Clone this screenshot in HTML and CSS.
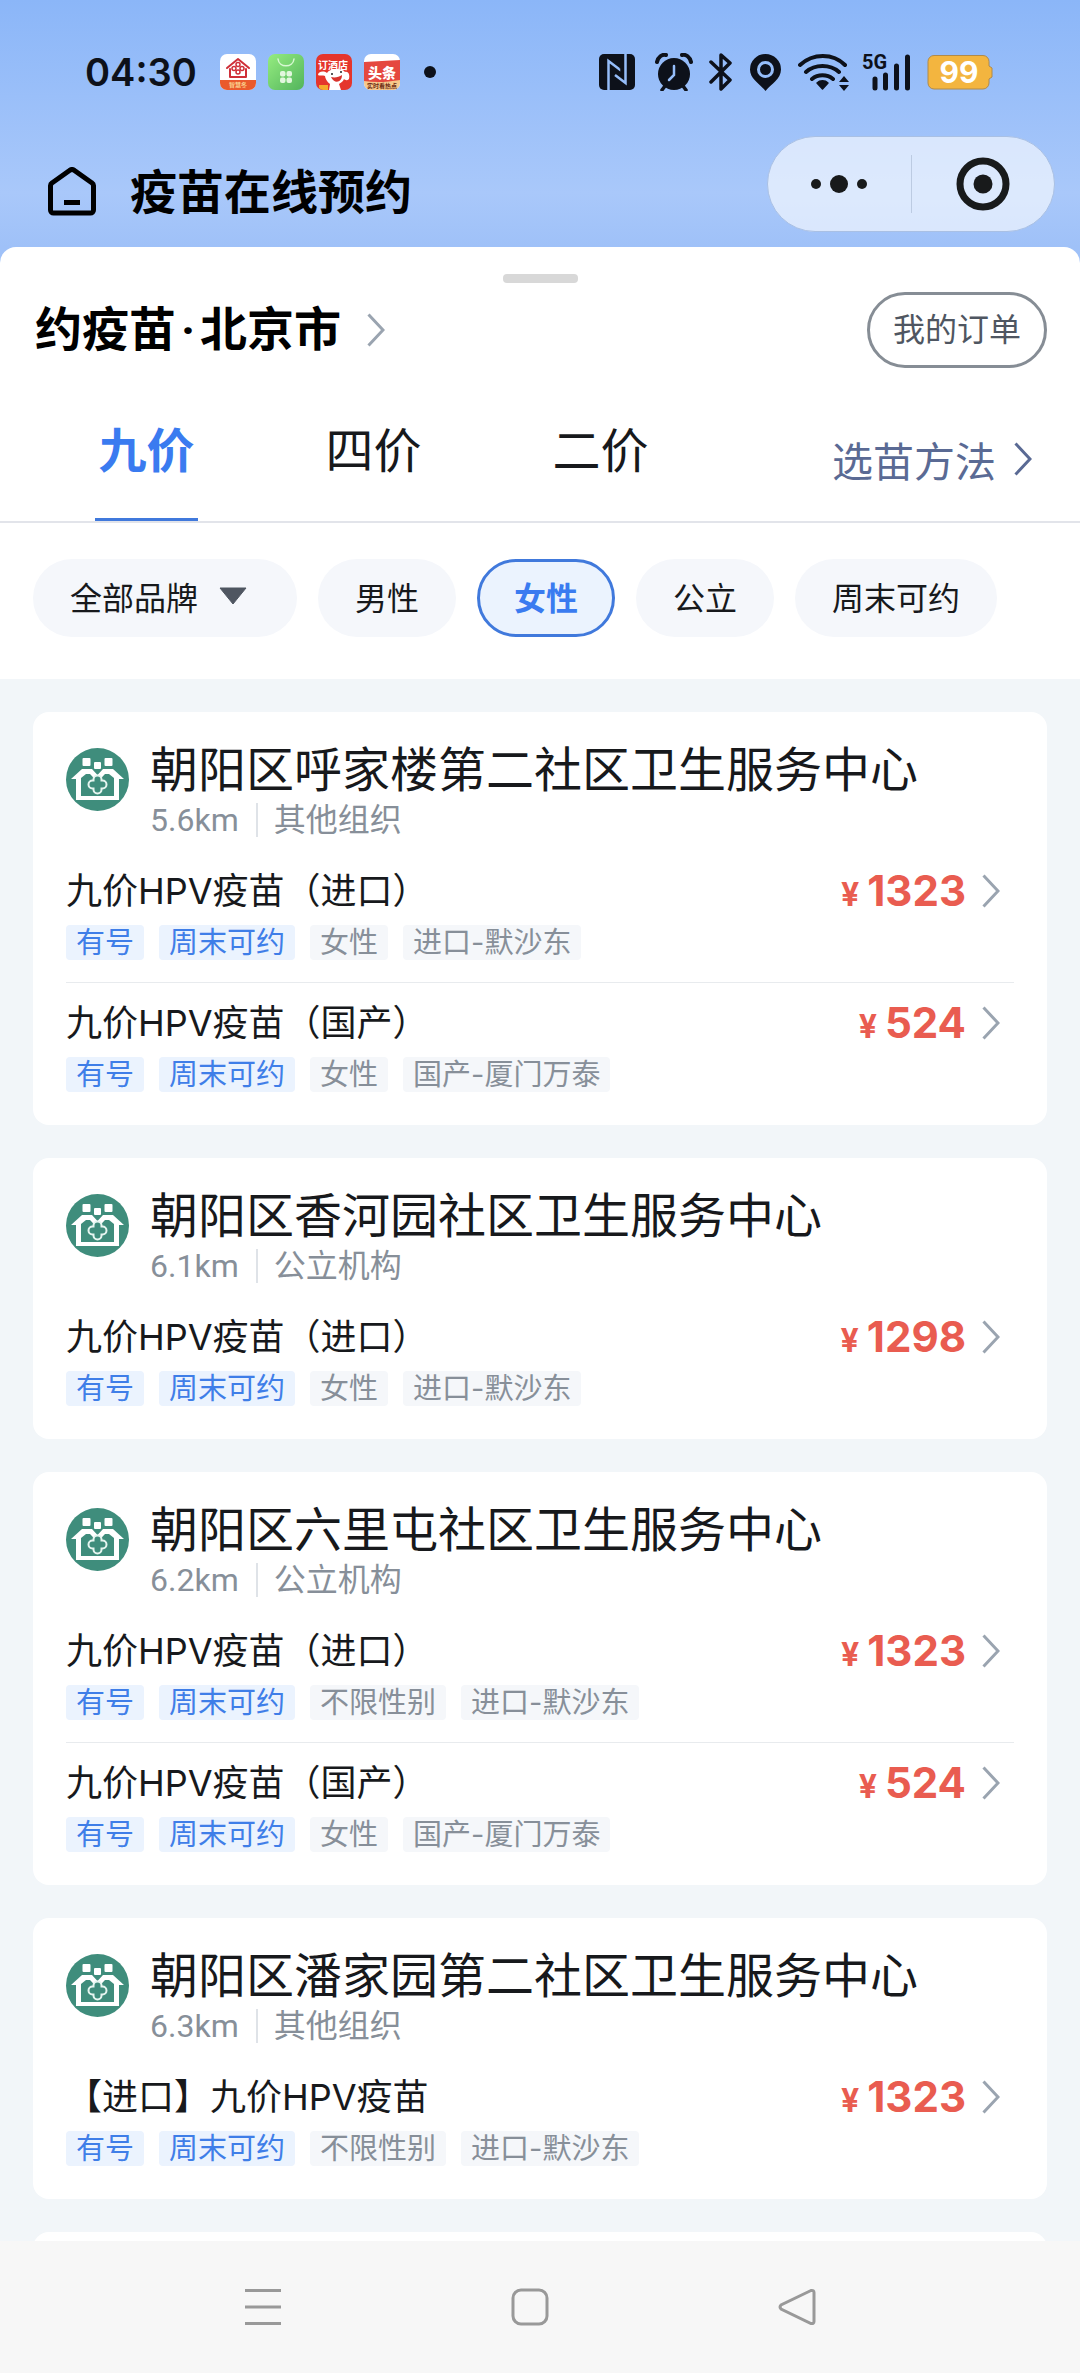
FILE: index.html
```html
<!DOCTYPE html>
<html lang="zh-CN">
<head>
  <meta charset="UTF-8">
  <meta name="viewport" content="width=device-width, initial-scale=1">
  <title>疫苗在线预约</title>
  <link rel="stylesheet" href="styles.css">
</head>
<body>
  <svg class="defs" aria-hidden="true">
    <symbol id="chevron" viewBox="0 0 18 34">
      <path d="M1.5 1.5 16 17 1.5 32.5" fill="none" stroke="currentColor" stroke-width="3"/>
    </symbol>
    <!-- community health logo -->
    <symbol id="clinic" viewBox="0 0 63 63">
      <circle cx="31.5" cy="31.5" r="31.5" fill="#3f8d7c"/>
      <g fill="#fff">
        <rect x="16.500" y="10" width="8" height="8" rx="1"/>
        <rect x="38.500" y="10" width="8" height="8" rx="1"/>
        <rect x="28" y="14" width="7" height="7" rx="1"/>
        <path d="M5 31 16 21h10l5.500 6 5.500-6h10l11 10h-5v21H10V31zM15 30v18h33V30l-5-4h-4l-7.500 8-7.500-8h-4z" fill-rule="evenodd"/>
      </g>
      <path d="M27.500 31.500a4 4 0 0 1 8 0v1h1a4 4 0 0 1 0 8h-1v1a4 4 0 0 1-8 0v-1h-1a4 4 0 0 1 0-8h1z" fill="#3f8d7c" stroke="#e6f5f0" stroke-width="2"/>
    </symbol>
  </svg>

  <header class="top">
    <div class="status">
      <span class="clock">04:30</span>
      <div class="apps">
        <svg width="36" height="36" viewBox="0 0 36 36">
          <rect width="36" height="36" rx="7" fill="#fff"/>
          <path d="M0 26h36v3a7 7 0 0 1-7 7H7a7 7 0 0 1-7-7z" fill="#ea5a2c"/>
          <path d="M7 14 18 5l11 9M10 15v8h16v-8" fill="none" stroke="#cf2f38" stroke-width="2" stroke-linejoin="round" stroke-linecap="round"/>
          <g fill="none" stroke="#cf2f38" stroke-width="1.500"><circle cx="18" cy="10.500" r="2"/><circle cx="18" cy="18" r="2"/><circle cx="14" cy="14.500" r="2"/><circle cx="22" cy="14.500" r="2"/></g>
          <text x="18" y="33" text-anchor="middle" class="app-mini gold">智慧冬</text>
        </svg>
        <svg width="36" height="36" viewBox="0 0 36 36">
          <linearGradient id="leaf" x2="1" y2="1"><stop stop-color="#95ec80"/><stop offset="1" stop-color="#52b45c"/></linearGradient>
          <rect width="36" height="36" rx="7" fill="url(#leaf)"/>
          <path d="M10 5c1 9 15 9 16 0" fill="none" stroke="#d7f8d3" stroke-width="1.500" stroke-linecap="round"/>
          <g fill="#e2f7de"><rect x="12" y="17" width="5.500" height="5.500" rx="2"/><rect x="18.500" y="17" width="5.500" height="5.500" rx="2"/><rect x="12" y="23.500" width="5.500" height="5.500" rx="2"/><rect x="18.500" y="23.500" width="5.500" height="5.500" rx="2"/></g>
        </svg>
        <svg width="36" height="36" viewBox="0 0 36 36">
          <rect width="36" height="36" rx="7" fill="#e5352c"/>
          <text x="17" y="15" text-anchor="middle" class="app-text">订酒店</text>
          <path d="M11 19c2-4 14-6 18-1 4-1 5 4 4 7-2 2-4 1-5 0-1 3-4 4-5 5l2 6H13l1-6c-3-2-5-6-5-8-2-1-6 0-7-1 0-3 5-5 9-2z" fill="#fff"/>
          <path d="M15 23c4 1 8 0 11-2 0 8-8 9-11 2z" fill="#d8332d"/>
          <circle cx="16" cy="20" r="1" fill="#222"/><circle cx="25" cy="18" r="1" fill="#222"/>
          <path d="M3 31h9v5H7a7 7 0 0 1-4-2z" fill="#f5a92c"/>
        </svg>
        <svg width="36" height="36" viewBox="0 0 36 36">
          <rect width="36" height="36" rx="7" fill="#fff"/>
          <path d="M0 8 36 6v22H0z" fill="#e5483f"/>
          <path d="M0 27c12 2 24 1 36-1v3a7 7 0 0 1-7 7H7a7 7 0 0 1-7-7z" fill="#f7c98c"/>
          <text x="18" y="24" text-anchor="middle" class="app-big">头条</text>
          <text x="18" y="34" text-anchor="middle" class="app-mini">实时看热点</text>
        </svg>
      </div>
      <span class="dot"></span>
      <div class="signals">
        <svg width="36" height="36" viewBox="0 0 36 36">
          <rect width="36" height="36" rx="5" fill="#0d111a"/>
          <path d="M9.500 36V7L20 15v-.5M26.500 0v29L16 21" fill="none" stroke="#95bdf9" stroke-width="2.500"/>
        </svg>
        <svg width="38" height="38" viewBox="0 0 38 38" class="alarm">
          <circle cx="19" cy="21" r="16" fill="#0d111a"/>
          <path d="M2 9c1-5 5-8 9-7M36 9c-1-5-5-8-9-7" fill="none" stroke="#0d111a" stroke-width="4" stroke-linecap="round"/>
          <path d="m10 33-3 4M28 33l3 4" stroke="#0d111a" stroke-width="3.500" stroke-linecap="round"/>
          <path d="M19 13v9l-5 5" fill="none" stroke="#95bdf9" stroke-width="2.500" stroke-linecap="round"/>
        </svg>
        <svg width="24" height="38" viewBox="0 0 24 38" class="bt">
          <path d="m2 9 19 18-9 9V2l9 8L2 29" fill="none" stroke="#0d111a" stroke-width="3.500" stroke-linejoin="round" stroke-linecap="round"/>
        </svg>
        <svg width="31" height="37" viewBox="0 0 31 37" class="pin">
          <path d="M15.500 0A15.500 15.500 0 0 1 31 15.500C31 25 21 30 15.500 37 10 30 0 25 0 15.500A15.500 15.500 0 0 1 15.500 0z" fill="#0d111a"/>
          <circle cx="15.500" cy="15.500" r="7" fill="none" stroke="#95bdf9" stroke-width="3"/>
        </svg>
        <svg width="51" height="37" viewBox="0 0 51 37" class="wifi">
          <path d="M2 11C15-1 35-1 47 11M8 18c9-8 24-8 33 0M14 25c6-5 15-5 21 0" fill="none" stroke="#0d111a" stroke-width="4" stroke-linecap="round"/>
          <path d="M19 29c3-3 8-3 11 0l-5.500 6z" fill="#0d111a" stroke="#0d111a" stroke-width="1.500" stroke-linejoin="round"/>
          <path d="m41 28 5-6 5 6zM41 31h10l-5 6z" fill="#0d111a"/>
        </svg>
        <svg width="49" height="50" viewBox="0 -6 49 50" class="cell">
          <text x="0" y="16" class="net">5G</text>
          <path d="M13 26v9M23.500 22v13M34.500 13v22M45.500 4v31" stroke="#0d111a" stroke-width="5" stroke-linecap="round"/>
        </svg>
        <svg width="66" height="36" viewBox="0 0 66 36" class="battery">
          <path d="M7 1.500h49a6 6 0 0 1 6 6V12l3 2v9l-3 2v4a6 6 0 0 1-6 6H7a6 6 0 0 1-6-6V7.500a6 6 0 0 1 6-6z" fill="#f3b53f" stroke="#b08a4a"/>
          <text x="32" y="29" text-anchor="middle" class="charge">99</text>
        </svg>
      </div>
    </div>

    <div class="navbar">
      <button class="home" aria-label="首页">
        <svg width="48" height="49" viewBox="0 0 48 49">
          <path d="M21.500 3.500 4 16a3 3 0 0 0-1.500 2.500V43A3 3 0 0 0 5.500 46h37a3 3 0 0 0 3-3V18.500A3 3 0 0 0 44 16L26.500 3.500a4 4 0 0 0-5 0zM16 35.500h16" fill="none" stroke="#000" stroke-width="5"/>
        </svg>
      </button>
      <h1>疫苗在线预约</h1>
      <div class="capsule">
        <button aria-label="更多">
          <svg width="58" height="20" viewBox="0 0 58 20"><circle cx="6" cy="10" r="5"/><circle cx="29" cy="10" r="9"/><circle cx="52" cy="10" r="5"/></svg>
        </button>
        <button aria-label="关闭">
          <svg width="54" height="54" viewBox="0 0 54 54"><circle cx="27" cy="27" r="23" fill="none" stroke="#181a1b" stroke-width="7"/><circle cx="27" cy="27" r="9.500"/></svg>
        </button>
      </div>
    </div>
  </header>

  <main>
    <section class="sheet">
      <div class="grabber"></div>
      <div class="city-row">
        <button class="city">约疫苗<span class="sep">·</span>北京市<svg class="chevron"><use href="#chevron"/></svg></button>
        <button class="orders">我的订单</button>
      </div>
      <div class="tabs">
        <button class="tab active"><span>九价</span></button>
        <button class="tab"><span>四价</span></button>
        <button class="tab"><span>二价</span></button>
        <a class="howto" href="#">选苗方法<svg class="chevron"><use href="#chevron"/></svg></a>
      </div>
      <div class="filters">
        <button class="chip brand">全部品牌<svg width="28" height="18" viewBox="0 0 28 18"><path d="M1 1h26L14 17z" fill="#4f5661" stroke="#4f5661" stroke-linejoin="round"/></svg></button>
        <button class="chip">男性</button>
        <button class="chip on">女性</button>
        <button class="chip">公立</button>
        <button class="chip">周末可约</button>
      </div>
    </section>

    <section class="list">
      <article class="card">
        <div class="head">
          <svg class="logo"><use href="#clinic"/></svg>
          <div>
            <h2>朝阳区呼家楼第二社区卫生服务中心</h2>
            <p class="meta"><span>5.6km</span><span>其他组织</span></p>
          </div>
        </div>
        <div class="item">
          <div class="line"><h3>九价HPV疫苗（进口）</h3><span class="price"><small>¥</small>1323</span><svg class="chevron"><use href="#chevron"/></svg></div>
          <div class="tags"><span class="tag blue">有号</span><span class="tag blue">周末可约</span><span class="tag">女性</span><span class="tag">进口-默沙东</span></div>
        </div>
        <div class="item">
          <div class="line"><h3>九价HPV疫苗（国产）</h3><span class="price"><small>¥</small>524</span><svg class="chevron"><use href="#chevron"/></svg></div>
          <div class="tags"><span class="tag blue">有号</span><span class="tag blue">周末可约</span><span class="tag">女性</span><span class="tag">国产-厦门万泰</span></div>
        </div>
      </article>

      <article class="card">
        <div class="head">
          <svg class="logo"><use href="#clinic"/></svg>
          <div>
            <h2>朝阳区香河园社区卫生服务中心</h2>
            <p class="meta"><span>6.1km</span><span>公立机构</span></p>
          </div>
        </div>
        <div class="item">
          <div class="line"><h3>九价HPV疫苗（进口）</h3><span class="price"><small>¥</small>1298</span><svg class="chevron"><use href="#chevron"/></svg></div>
          <div class="tags"><span class="tag blue">有号</span><span class="tag blue">周末可约</span><span class="tag">女性</span><span class="tag">进口-默沙东</span></div>
        </div>
      </article>

      <article class="card">
        <div class="head">
          <svg class="logo"><use href="#clinic"/></svg>
          <div>
            <h2>朝阳区六里屯社区卫生服务中心</h2>
            <p class="meta"><span>6.2km</span><span>公立机构</span></p>
          </div>
        </div>
        <div class="item">
          <div class="line"><h3>九价HPV疫苗（进口）</h3><span class="price"><small>¥</small>1323</span><svg class="chevron"><use href="#chevron"/></svg></div>
          <div class="tags"><span class="tag blue">有号</span><span class="tag blue">周末可约</span><span class="tag">不限性别</span><span class="tag">进口-默沙东</span></div>
        </div>
        <div class="item">
          <div class="line"><h3>九价HPV疫苗（国产）</h3><span class="price"><small>¥</small>524</span><svg class="chevron"><use href="#chevron"/></svg></div>
          <div class="tags"><span class="tag blue">有号</span><span class="tag blue">周末可约</span><span class="tag">女性</span><span class="tag">国产-厦门万泰</span></div>
        </div>
      </article>

      <article class="card">
        <div class="head">
          <svg class="logo"><use href="#clinic"/></svg>
          <div>
            <h2>朝阳区潘家园第二社区卫生服务中心</h2>
            <p class="meta"><span>6.3km</span><span>其他组织</span></p>
          </div>
        </div>
        <div class="item">
          <div class="line"><h3>【进口】九价HPV疫苗</h3><span class="price"><small>¥</small>1323</span><svg class="chevron"><use href="#chevron"/></svg></div>
          <div class="tags"><span class="tag blue">有号</span><span class="tag blue">周末可约</span><span class="tag">不限性别</span><span class="tag">进口-默沙东</span></div>
        </div>
      </article>

      <article class="card"></article>
    </section>
  </main>

  <nav class="sysbar">
    <button aria-label="菜单"><svg width="38" height="38" viewBox="0 0 38 38"><path d="M1 2.500h36M1 19h36M1 35.500h36"/></svg></button>
    <button aria-label="主屏幕"><svg width="38" height="38" viewBox="0 0 38 38"><rect x="2" y="2" width="34" height="34" rx="8"/></svg></button>
    <button aria-label="返回"><svg width="38" height="38" viewBox="0 0 38 38"><path d="M33 2.500 3 17q-2 2 0 4l30 14.500q3 .5 3-2v-29q0-2.500-3-2z"/></svg></button>
  </nav>
</body>
</html>
```

FILE: styles.css
```css
* { box-sizing: border-box; }
body {
  margin: 0;
  height: 100vh;
  display: flex;
  flex-direction: column;
  overflow: hidden;
  background: #f2f6f9;
  color: #17191c;
  font-family: Roboto, "Noto Sans CJK SC", sans-serif;
}
button { padding: 0; border: 0; background: none; font: inherit; color: inherit; }
h1, h2, h3, p { margin: 0; }
svg { display: block; flex: none; }
.defs { position: absolute; width: 0; height: 0; }
.chevron { width: 18px; height: 34px; color: #9aa4b0; }

/* header */
.top {
  padding-bottom: 16px;
  background: linear-gradient(#8bb6f8, #a9c8fa 78%, #9fc1f8);
}
.status {
  display: flex;
  align-items: center;
  height: 136px;
  padding: 8px 87px 0 85px;
  color: #0d111a;
}
.clock { width: 135px; font: 600 38px/48px Inter, sans-serif; }
.apps { display: flex; gap: 12px; }
.dot { width: 12px; height: 12px; margin-left: 24px; border-radius: 50%; background: #0d111a; }
.app-text { font: 700 10px "Noto Sans CJK SC", sans-serif; fill: #fff; }
.app-big { font: 900 14px "Noto Sans CJK SC", sans-serif; fill: #fff; }
.app-mini { font: 700 6px "Noto Sans CJK SC", sans-serif; fill: #6b2a12; }
.gold { fill: #f9cf8d; }
.signals { display: flex; align-items: center; margin-left: auto; }
.alarm { margin-left: 20px; }
.bt { margin-left: 16px; }
.pin { margin-left: 17px; }
.wifi { margin-left: 17px; }
.cell { margin-left: 13px; }
.battery { margin-left: 16px; }
.net { font: 700 20px Roboto, sans-serif; fill: #0d111a; }
.charge { font: 700 30px Inter, sans-serif; fill: #fff; }

.navbar { display: flex; align-items: center; height: 95px; padding: 0 25px 0 48px; color: #000; }
.home { margin-top: 16px; }
.navbar h1 { margin: 18px 0 0 34px; font-size: 47px; line-height: 56px; font-weight: 700; }
.capsule {
  display: flex;
  align-items: center;
  width: 288px;
  height: 96px;
  margin-left: auto;
  border: 1px solid #a9c0e4;
  border-radius: 48px;
  background: rgba(255, 255, 255, .6);
  fill: #181a1b;
}
.capsule button { flex: 1; display: flex; justify-content: center; }
.capsule button + button { height: 58px; align-items: center; border-left: 1px solid #bccbe2; }

/* sheet */
main { flex: 1; min-height: 0; overflow: hidden; background: linear-gradient(#9fc1f8 40px, #f2f6f9 40px); }
.sheet { padding: 27px 0 42px; border-radius: 16px 16px 0 0; background: #fff; }
.grabber { width: 75px; height: 9px; margin: 0 auto; border-radius: 4px; background: #d8d8d8; }
.city-row { display: flex; justify-content: space-between; align-items: center; padding: 9px 33px 0 35px; }
.city { display: flex; align-items: center; color: #000; font-size: 47px; line-height: 56px; font-weight: 700; }
.sep { width: 24px; text-align: center; }
.city .chevron { margin-left: 26px; }
.orders {
  height: 76px;
  padding: 0 23px 6px;
  border: 3px solid #868d95;
  border-radius: 38px;
  color: #4f5661;
  font-size: 32px;
}
.tabs { display: flex; height: 155px; padding: 0 48px 0 33px; border-bottom: 2px solid #e2e4ea; }
.tab { flex: 1; max-width: 227px; display: flex; justify-content: center; font-size: 48px; }
.tab span { display: flex; align-items: center; padding: 8px 3px 0; height: 153px; border-bottom: 3px solid transparent; }
.tab.active { color: #3a7bf0; font-weight: 700; }
.tab.active span { border-color: #4079dc; }
.howto {
  display: flex;
  align-items: center;
  margin-left: auto;
  padding-top: 28px;
  color: #5a6a94;
  font-size: 41px;
  text-decoration: none;
}
.howto .chevron { margin-left: 18px; color: inherit; }
.filters { display: flex; gap: 21px; padding: 36px 33px 0; }
.chip {
  display: flex;
  align-items: center;
  height: 78px;
  padding: 0 37px 5px;
  border-radius: 39px;
  background: #f5f7fb;
  font-size: 32px;
}
.brand { gap: 21px; padding-right: 50px; }
.chip.on { padding: 0 34px 5px; border: 3px solid #4079dc; background: #ebf3fe; color: #3a7bf0; font-weight: 700; }

/* list */
.list { display: grid; gap: 33px; padding: 33px; }
.card { padding: 33px 33px 11px; border-radius: 16px; background: #fff; }
.head { display: flex; gap: 21px; margin-bottom: 12px; }
.logo { width: 63px; height: 63px; margin-top: 3px; }
.head h2 { font-size: 48px; line-height: 52px; font-weight: 400; }
.meta { display: flex; align-items: center; margin-top: 4px; color: #878f99; font-size: 32px; line-height: 38px; }
.meta span + span { margin-left: 17px; padding-left: 16px; border-left: 2px solid #dfe3e8; line-height: 34px; }
.item { padding: 21px 0 22px; }
.item + .item { border-top: 1px solid #e8ebee; }
.line { display: flex; align-items: center; height: 38px; padding-right: 14px; }
.line h3 { flex: 1; font: 400 36px/38px Inter, "Noto Sans CJK SC", sans-serif; }
.price { padding-top: 4px; color: #e95c50; font: 700 42px/38px Inter, sans-serif; }
.price small { margin-right: 8px; font-size: 32px; }
.line .chevron { margin-left: 16px; }
.tags { display: flex; gap: 15px; margin-top: 15px; }
.tag { padding: 0 10px; border-radius: 4px; background: #f5f7fa; color: #878f99; font: 29px/35px Inter, "Noto Sans CJK SC", sans-serif; }
.blue { background: #ebf3fe; color: #3f7ee8; }

/* system bar */
.sysbar { display: flex; justify-content: center; align-items: center; gap: 229px; height: 132px; padding-right: 20px; background: #f7f7f7; }
.sysbar svg { fill: none; stroke: #999; stroke-width: 3; }
```
